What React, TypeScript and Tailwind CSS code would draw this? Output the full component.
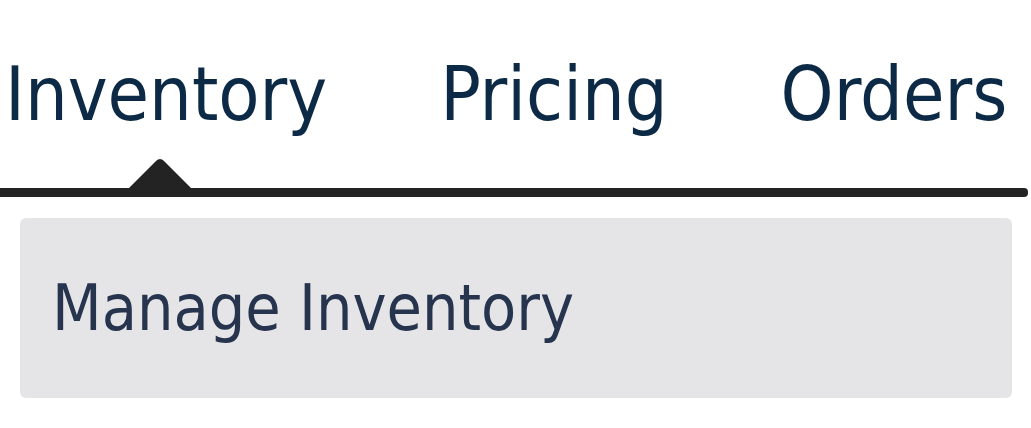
const tabs = ['Inventory', 'Pricing', 'Orders'];

export default function App() {
  return (
    <div
      className="w-[1031px] h-[428px] bg-white overflow-hidden"
      style={{ fontFamily: '"DejaVu Sans Condensed", "DejaVu Sans", sans-serif' }}
    >
      {/* top nav */}
      <div className="relative h-[188px]">
        <div className="flex gap-[113px] pl-[5px] pt-[57px]">
          {tabs.map((tab) => (
            <span key={tab} className="text-[75px] leading-none text-[#0c2a46] whitespace-nowrap">
              {tab}
            </span>
          ))}
        </div>
        <svg
          className="absolute left-[129px] bottom-0"
          width="62"
          height="31"
          viewBox="0 0 62 31"
        >
          <path d="M0 31 L27 4 Q31 0 35 4 L62 31 Z" fill="#232323" />
        </svg>
      </div>
      <div className="h-[9px] mr-[3px] bg-[#232323] rounded-r-sm" />

      {/* dropdown */}
      <div className="pt-[21px] pl-[20px] pr-[19px]">
        <div className="h-[180px] flex items-center pl-[32px] rounded-md bg-[#e5e5e7]">
          <span className="text-[64px] leading-none text-[#27344e] whitespace-nowrap">
            Manage Inventory
          </span>
        </div>
      </div>
    </div>
  );
}
